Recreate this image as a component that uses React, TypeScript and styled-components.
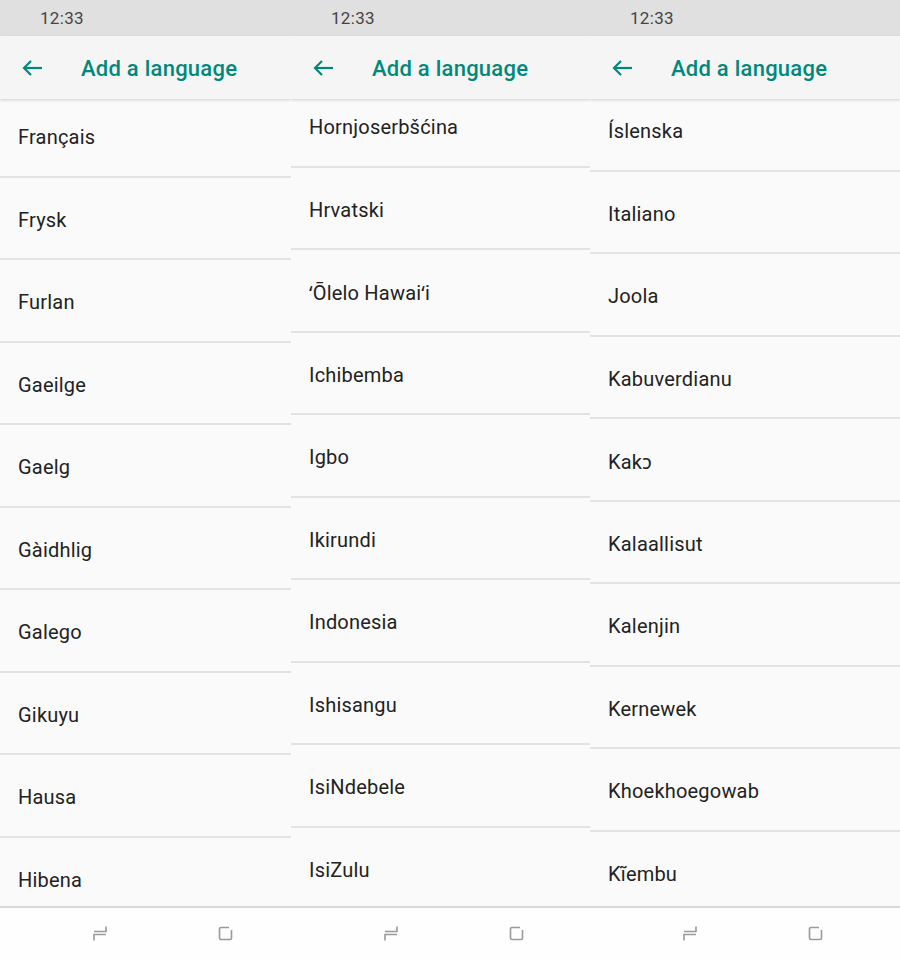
import React from "react";
import styled, { createGlobalStyle } from "styled-components";

const GlobalStyle = createGlobalStyle`
  html, body {
    margin: 0;
    padding: 0;
    background: #fafafa;
  }
  body {
    font-family: Roboto, "Noto Sans", "DejaVu Sans", sans-serif;
    -webkit-font-smoothing: antialiased;
  }
`;

const Screens = styled.div`
  display: grid;
  grid-template-columns: 291px 299px 310px;
  width: 900px;
  height: 960px;
  overflow: hidden;
`;

const Phone = styled.div`
  display: flex;
  flex-direction: column;
  height: 960px;
  overflow: hidden;
  background: #fafafa;
`;

const StatusBar = styled.div`
  height: 36px;
  flex: none;
  display: flex;
  align-items: center;
  padding-left: 40px;
  background: #e0e0e0;
  color: #444;
  font-size: 17px;
  letter-spacing: 0.3px;
`;

const AppBar = styled.div`
  position: relative;
  z-index: 1;
  height: 63px;
  flex: none;
  display: flex;
  align-items: center;
  background: #f5f5f5;
  box-shadow: 0 1px 3px rgba(0, 0, 0, 0.12), 0 2px 2px rgba(0, 0, 0, 0.04);
`;

const BackButton = styled.div`
  width: 81px;
  height: 63px;
  display: flex;
  align-items: center;
  padding-left: 22px;
  box-sizing: border-box;
  svg {
    display: block;
  }
`;

const Title = styled.div`
  color: #00897b;
  font-size: 22px;
  font-weight: 500;
  letter-spacing: 0.25px;
  margin-top: 1px;
`;

const ListViewport = styled.div`
  flex: 1;
  overflow: hidden;
`;

const List = styled.div<{ $scroll: number }>`
  margin-top: ${(p) => -p.$scroll}px;
`;

const Row = styled.div`
  height: 82.5px;
  box-sizing: border-box;
  display: flex;
  align-items: center;
  padding-left: 18px;
  padding-top: 4px;
  border-bottom: 2px solid #e3e3e3;
  color: #222;
  font-size: 20px;
  letter-spacing: 0.2px;
`;

const NavBar = styled.div`
  height: 54px;
  flex: none;
  box-sizing: border-box;
  border-top: 2px solid #d9d9d9;
  background: #fefefe;
  display: flex;
  align-items: center;
  padding-bottom: 2px;
`;

const NavSlot = styled.div<{ $left: number }>`
  margin-left: ${(p) => p.$left}px;
  display: flex;
  svg {
    display: block;
  }
`;

const BackArrow = () => (
  <svg width="21" height="16" viewBox="0 0 21 16" fill="none">
    <path d="M2 8H20" stroke="#00897b" strokeWidth="2.2" />
    <path d="M9 1L2 8L9 15" stroke="#00897b" strokeWidth="2.2" />
  </svg>
);

const SwitchIcon = () => (
  <svg width="14" height="15" viewBox="0 0 14 15" fill="none">
    <path d="M13 0.5V5.5H1" stroke="#9a9a9a" strokeWidth="1.6" />
    <path d="M1 14.5V8.5H13" stroke="#9a9a9a" strokeWidth="1.6" />
  </svg>
);

const SquareIcon = () => (
  <svg width="15" height="15" viewBox="0 0 15 15" fill="none">
    <path
      d="M11 1.5H3A1.5 1.5 0 0 0 1.5 3V12A1.5 1.5 0 0 0 3 13.5H12A1.5 1.5 0 0 0 13.5 12V4"
      stroke="#9a9a9a"
      strokeWidth="1.6"
    />
  </svg>
);

interface ScreenData {
  scroll: number;
  languages: string[];
}

const screens: ScreenData[] = [
  {
    scroll: 4,
    languages: [
      "Français",
      "Frysk",
      "Furlan",
      "Gaeilge",
      "Gaelg",
      "Gàidhlig",
      "Galego",
      "Gikuyu",
      "Hausa",
      "Hibena",
    ],
  },
  {
    scroll: 14,
    languages: [
      "Hornjoserbšćina",
      "Hrvatski",
      "ʻŌlelo Hawaiʻi",
      "Ichibemba",
      "Igbo",
      "Ikirundi",
      "Indonesia",
      "Ishisangu",
      "IsiNdebele",
      "IsiZulu",
    ],
  },
  {
    scroll: 10,
    languages: [
      "Íslenska",
      "Italiano",
      "Joola",
      "Kabuverdianu",
      "Kakɔ",
      "Kalaallisut",
      "Kalenjin",
      "Kernewek",
      "Khoekhoegowab",
      "Kĩembu",
    ],
  },
];

const Screen: React.FC<ScreenData> = ({ scroll, languages }) => (
  <Phone>
    <StatusBar>12:33</StatusBar>
    <AppBar>
      <BackButton>
        <BackArrow />
      </BackButton>
      <Title>Add a language</Title>
    </AppBar>
    <ListViewport>
      <List $scroll={scroll}>
        {languages.map((lang) => (
          <Row key={lang}>{lang}</Row>
        ))}
      </List>
    </ListViewport>
    <NavBar>
      <NavSlot $left={93}>
        <SwitchIcon />
      </NavSlot>
      <NavSlot $left={111}>
        <SquareIcon />
      </NavSlot>
    </NavBar>
  </Phone>
);

export default function App() {
  return (
    <>
      <GlobalStyle />
      <Screens>
        {screens.map((s, i) => (
          <Screen key={i} {...s} />
        ))}
      </Screens>
    </>
  );
}
